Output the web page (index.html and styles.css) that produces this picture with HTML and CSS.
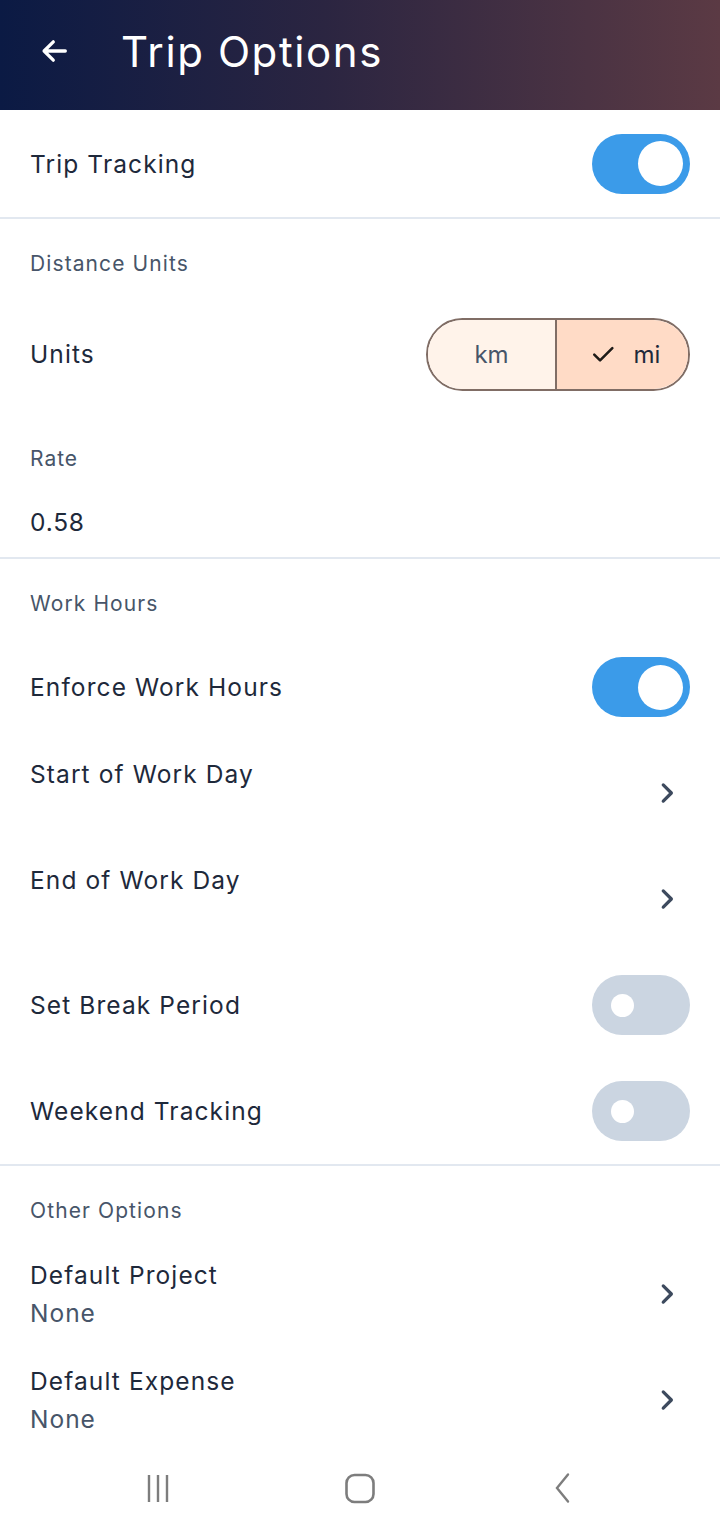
FILE: index.html
```html
<!DOCTYPE html>
<html lang="en">
<head>
  <meta charset="UTF-8" />
  <meta name="viewport" content="width=device-width, initial-scale=1.0"/>
  <title>Trip Options</title>
  <link rel="stylesheet" href="styles.css">
</head>
<body>

<header class="topbar">
  <svg class="back-icon" viewBox="0 0 24 24" width="34" height="34">
    <path d="M20 12H5M11.5 5.5L5 12l6.5 6.5" fill="none" stroke="#fff" stroke-width="2.3" stroke-linecap="round" stroke-linejoin="round"/>
  </svg>
  <h1>Trip Options</h1>
</header>

<main class="settings">
  <section class="group">
    <div class="row row-toggle first">
      <span class="row-title">Trip Tracking</span>
      <span class="switch on"><span class="knob"></span></span>
    </div>
  </section>

  <section class="group">
    <div class="group-title">Distance Units</div>
    <div class="row row-units">
      <span class="row-title">Units</span>
      <div class="segmented">
        <span class="seg">km</span>
        <span class="seg selected">
          <svg viewBox="0 0 24 24" width="28" height="28">
            <path d="M4.5 12.5l5 5L20 7" fill="none" stroke="#1e1b18" stroke-width="2.2" stroke-linecap="round" stroke-linejoin="round"/>
          </svg>
          mi
        </span>
      </div>
    </div>
    <div class="field">
      <div class="field-label">Rate</div>
      <div class="field-value">0.58</div>
    </div>
  </section>

  <section class="group">
    <div class="group-title">Work Hours</div>
    <div class="row row-toggle">
      <span class="row-title">Enforce Work Hours</span>
      <span class="switch on"><span class="knob"></span></span>
    </div>
    <div class="row row-nav">
      <div class="row-text">
        <span class="row-title">Start of Work Day</span>
        <span class="row-sub"></span>
      </div>
      <svg class="chevron" viewBox="0 0 24 24" width="30" height="30"><path d="M9 5.5l6.5 6.5L9 18.5" fill="none" stroke="#3d4a5e" stroke-width="2.6" stroke-linecap="round" stroke-linejoin="round"/></svg>
    </div>
    <div class="row row-nav">
      <div class="row-text">
        <span class="row-title">End of Work Day</span>
        <span class="row-sub"></span>
      </div>
      <svg class="chevron" viewBox="0 0 24 24" width="30" height="30"><path d="M9 5.5l6.5 6.5L9 18.5" fill="none" stroke="#3d4a5e" stroke-width="2.6" stroke-linecap="round" stroke-linejoin="round"/></svg>
    </div>
    <div class="row row-toggle">
      <span class="row-title">Set Break Period</span>
      <span class="switch"><span class="knob"></span></span>
    </div>
    <div class="row row-toggle">
      <span class="row-title">Weekend Tracking</span>
      <span class="switch"><span class="knob"></span></span>
    </div>
  </section>

  <section class="group last">
    <div class="group-title">Other Options</div>
    <div class="row row-nav">
      <div class="row-text">
        <span class="row-title">Default Project</span>
        <span class="row-sub">None</span>
      </div>
      <svg class="chevron" viewBox="0 0 24 24" width="30" height="30"><path d="M9 5.5l6.5 6.5L9 18.5" fill="none" stroke="#3d4a5e" stroke-width="2.6" stroke-linecap="round" stroke-linejoin="round"/></svg>
    </div>
    <div class="row row-nav">
      <div class="row-text">
        <span class="row-title">Default Expense</span>
        <span class="row-sub">None</span>
      </div>
      <svg class="chevron" viewBox="0 0 24 24" width="30" height="30"><path d="M9 5.5l6.5 6.5L9 18.5" fill="none" stroke="#3d4a5e" stroke-width="2.6" stroke-linecap="round" stroke-linejoin="round"/></svg>
    </div>
  </section>
</main>

<nav class="navbar">
  <svg viewBox="0 0 32 32" width="32" height="32">
    <path d="M7 3v27M16 3v27M25 3v27" stroke="#7d7d7d" stroke-width="2.4" fill="none"/>
  </svg>
  <svg viewBox="0 0 32 32" width="32" height="32">
    <rect x="2.5" y="3" width="27" height="27" rx="8" stroke="#7d7d7d" stroke-width="2.6" fill="none"/>
  </svg>
  <svg viewBox="0 0 32 32" width="32" height="32">
    <path d="M22 2.5L11 16l11 13.5" stroke="#7d7d7d" stroke-width="2.4" fill="none" stroke-linecap="round"/>
  </svg>
</nav>

</body>
</html>
```

FILE: styles.css
```css
body {
  font-family: Inter, "Noto Sans", sans-serif;
  margin: 0;
  background-color: #fff;
  color: #1e293b;
  width: 720px;
}

.topbar {
  display: flex;
  align-items: center;
  height: 110px;
  padding-left: 37px;
  box-sizing: border-box;
  background: linear-gradient(90deg, #0b1a44 0%, #2b2541 45%, #5b3a44 100%);
  color: white;
}

.back-icon {
  display: block;
  margin-top: -8px;
}

.topbar h1 {
  margin: -8px 0 0 50px;
  font-size: 42px;
  font-weight: 400;
  letter-spacing: 1.6px;
}

.group {
  border-bottom: 2px solid #e2e8f0;
}

.group.last {
  border-bottom: none;
}

.group-title {
  padding: 32px 30px 17px;
  line-height: 26px;
  font-size: 21px;
  color: #475569;
  letter-spacing: 1.1px;
}

.row {
  display: flex;
  align-items: center;
  justify-content: space-between;
  padding: 0 30px;
}

.row-title {
  font-size: 24.5px;
  line-height: 38px;
  letter-spacing: 1.1px;
  color: #1e293b;
}

.row-toggle {
  height: 106px;
}

.row-toggle.first {
  height: 107px;
}

.row-nav {
  height: 106px;
  padding-right: 38px;
}

.row-text {
  display: flex;
  flex-direction: column;
}

.row-sub {
  height: 38px;
  font-size: 24.5px;
  line-height: 38px;
  letter-spacing: 1px;
  color: #475569;
}

.switch {
  display: flex;
  align-items: center;
  width: 98px;
  height: 60px;
  border-radius: 30px;
  background-color: #cbd5e1;
  box-sizing: border-box;
  padding-left: 19px;
}

.switch .knob {
  width: 23px;
  height: 23px;
  border-radius: 50%;
  background-color: #fff;
}

.switch.on {
  background-color: #3b9be9;
  justify-content: flex-end;
  padding: 0 7px;
}

.switch.on .knob {
  width: 45px;
  height: 45px;
}

.row-units {
  height: 120px;
}

.segmented {
  display: flex;
  width: 264px;
  height: 73px;
  border: 2px solid #806d65;
  border-radius: 37px;
  overflow: hidden;
  box-sizing: border-box;
}

.seg {
  flex: 1;
  display: flex;
  align-items: center;
  justify-content: center;
  gap: 17px;
  font-size: 24px;
  color: #475569;
  background-color: #fff3ea;
}

.seg.selected {
  border-left: 2px solid #806d65;
  background-color: #ffdbc6;
  color: #1e293b;
  padding-left: 4px;
}

.field {
  padding: 32px 30px 20px;
}

.field-label {
  font-size: 21px;
  line-height: 26px;
  color: #475569;
  letter-spacing: 1px;
}

.field-value {
  margin-top: 35px;
  font-size: 24.5px;
  line-height: 30px;
  letter-spacing: 0.8px;
}

.navbar {
  display: flex;
  justify-content: center;
  gap: 170px;
  padding: 19px 0 30px;
}
```
